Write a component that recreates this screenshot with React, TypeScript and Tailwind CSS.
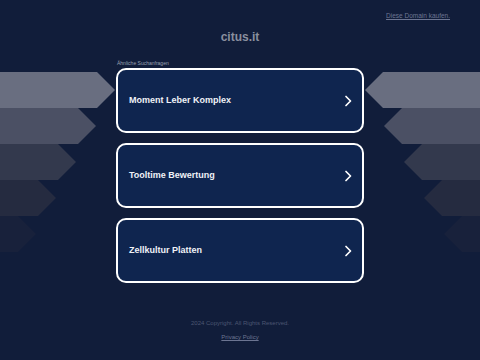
import React from "react";

const searches = ["Moment Leber Komplex", "Tooltime Bewertung", "Zellkultur Platten"];

// left side arrow bands, the right side is mirrored
const bands = [
  { y: 72, end: 97, fill: "#696e80" },
  { y: 108, end: 78, fill: "#4b5064" },
  { y: 144, end: 58, fill: "#33394d" },
  { y: 180, end: 38, fill: "#252b40" },
  { y: 216, end: 18, fill: "#18213b" },
];

function Bands() {
  return (
    <svg className="absolute left-0 top-0 pointer-events-none" width="480" height="360" viewBox="0 0 480 360">
      {bands.map((b) => (
        <g key={b.y} fill={b.fill}>
          <polygon points={`0,${b.y} ${b.end},${b.y} ${b.end + 18},${b.y + 18} ${b.end},${b.y + 36} 0,${b.y + 36}`} />
          <polygon
            points={`480,${b.y} ${480 - b.end},${b.y} ${462 - b.end},${b.y + 18} ${480 - b.end},${b.y + 36} 480,${b.y + 36}`}
          />
        </g>
      ))}
    </svg>
  );
}

function Chevron() {
  return (
    <svg width="8" height="12" viewBox="0 0 8 12" fill="none">
      <polyline points="2,1.5 6.5,6 2,10.5" stroke="#ffffff" strokeWidth="1.7" strokeLinecap="round" strokeLinejoin="round" />
    </svg>
  );
}

export default function App() {
  return (
    <div
      className="relative w-[480px] h-[360px] overflow-hidden bg-[#111d3a]"
      style={{ fontFamily: '"Liberation Sans", Arial, sans-serif' }}
    >
      <Bands />
      <div className="relative flex flex-col">
        <div className="flex justify-end pt-[11px] pr-[30px] h-[24px]">
          <a href="#" className="text-[6.5px] text-[#6c7592] underline leading-[10px]">
            Diese Domain kaufen.
          </a>
        </div>
        <h1 className="mt-[5px] text-center text-[12px] leading-[16px] font-bold text-[#8a8f9e]">citus.it</h1>
        <div className="mx-auto w-[248px] mt-[15px]">
          <p className="text-[5px] leading-[6px] text-[#9ba2b4] pl-[1px]">Ähnliche Suchanfragen</p>
          <div className="flex flex-col gap-[10px] mt-[2px]">
            {searches.map((s) => (
              <a
                key={s}
                href="#"
                className="flex items-center justify-between h-[65px] rounded-[10px] border-[2.5px] border-white bg-[#0f254f] pl-[11px] pr-[10px]"
              >
                <span className="text-[9px] font-bold text-[#f0f2f7]">{s}</span>
                <Chevron />
              </a>
            ))}
          </div>
        </div>
        <p className="mt-[36px] text-center text-[6px] leading-[8px] text-[#4c5672]">
          2024 Copyright. All Rights Reserved.
        </p>
        <a href="#" className="mt-[6px] mx-auto text-[6px] leading-[8px] text-[#6c7592] underline">
          Privacy Policy
        </a>
      </div>
    </div>
  );
}
